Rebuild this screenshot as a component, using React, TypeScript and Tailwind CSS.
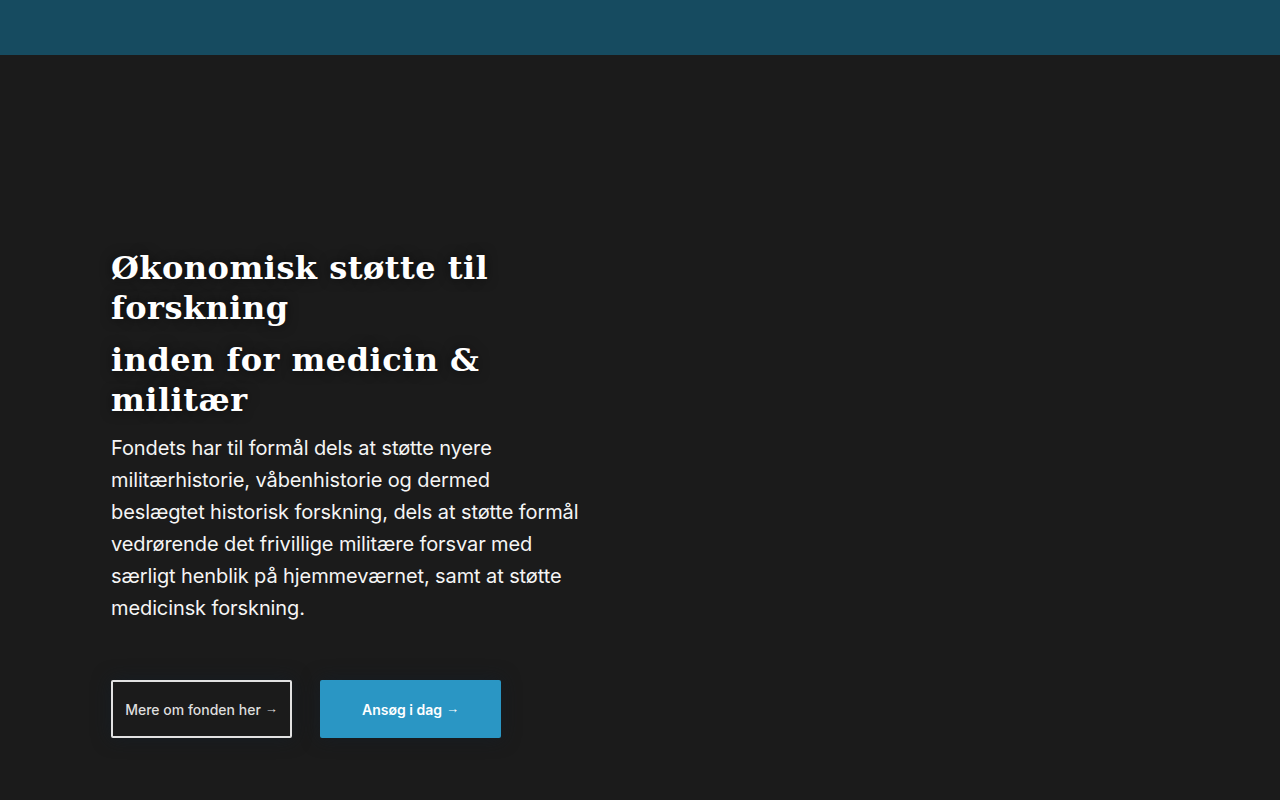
const arrowStyle = { fontFamily: "'Liberation Sans', sans-serif" };

export default function App() {
  return (
    <div className="min-h-[800px] bg-[#1b1b1b] flex flex-col" style={{ fontFamily: "Inter, 'Noto Sans', sans-serif" }}>
      <header className="h-[55px] bg-[#164b60] shrink-0" />
      <main className="px-[111px] pt-[193px]">
        <div className="max-w-[476px]">
          <h1
            className="text-[32px] leading-[40px] font-bold tracking-[0.015em] text-white [text-shadow:0_0_12px_rgba(0,0,0,0.6)]"
            style={{ fontFamily: "'DejaVu Serif', serif" }}
          >
            Økonomisk støtte til forskning
          </h1>
          <h2
            className="mt-3 text-[32px] leading-[40px] font-bold tracking-[0.015em] text-white [text-shadow:0_0_12px_rgba(0,0,0,0.6)]"
            style={{ fontFamily: "'DejaVu Serif', serif" }}
          >
            inden for medicin &amp; militær
          </h2>
          <p className="mt-3 text-[20px] leading-8 text-[#f5f5f5] font-normal tracking-[-0.005em]">
            Fondets har til formål dels at støtte nyere militærhistorie, våbenhistorie og dermed beslægtet historisk forskning, dels at støtte formål vedrørende det frivillige militære forsvar med særligt henblik på hjemmeværnet, samt at støtte medicinsk forskning.
          </p>
        </div>
        <div className="mt-14 flex gap-7">
          <a className="w-[181px] h-[58px] flex items-center justify-center gap-1 border-2 border-[#e2e2e2] rounded-[2px] text-[14px] font-medium text-[#dedede] shadow-[0_0_18px_rgba(20,30,40,0.7)]">
            Mere om fonden her <span style={arrowStyle} className="text-[13px]">→</span>
          </a>
          <a className="w-[181px] h-[58px] flex items-center justify-center gap-1 bg-[#2a96c4] rounded-[2px] text-[14px] font-semibold text-white shadow-[0_0_18px_rgba(20,30,40,0.7)]">
            Ansøg i dag <span style={arrowStyle} className="text-[13px] font-normal">→</span>
          </a>
        </div>
      </main>
    </div>
  );
}
